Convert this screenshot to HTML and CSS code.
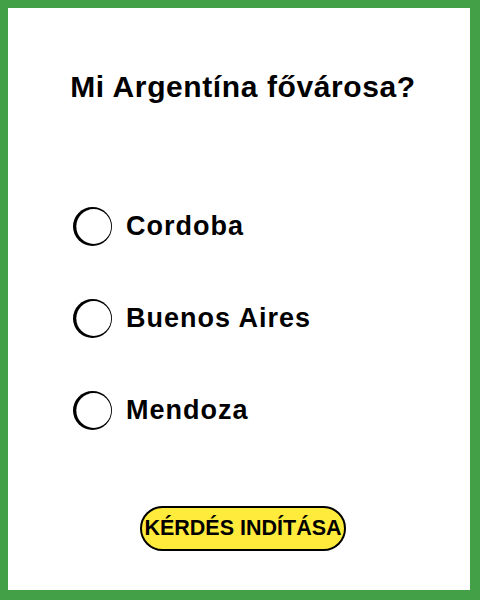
FILE: index.html
```html
<!DOCTYPE html>
<html lang="hu">
<head>
  <meta charset="UTF-8">
  <meta name="viewport" content="width=device-width, initial-scale=1.0">
  <title>Kvíz</title>
  <link rel="stylesheet" href="styles.css">
</head>
<body>
  <div class="frame">
    <h1 class="question">Mi Argentína fővárosa?</h1>

    <!-- Answer options -->
    <ul class="options">
      <li class="option">
        <svg class="radio" viewBox="0 0 39 39" width="39" height="39">
          <circle cx="19.5" cy="19.5" r="19.5" fill="#000"/>
          <circle cx="20.7" cy="19.5" r="17.4" fill="#fff"/>
        </svg>
        <span>Cordoba</span>
      </li>
      <li class="option">
        <svg class="radio" viewBox="0 0 39 39" width="39" height="39">
          <circle cx="19.5" cy="19.5" r="19.5" fill="#000"/>
          <circle cx="20.7" cy="19.5" r="17.4" fill="#fff"/>
        </svg>
        <span>Buenos Aires</span>
      </li>
      <li class="option">
        <svg class="radio" viewBox="0 0 39 39" width="39" height="39">
          <circle cx="19.5" cy="19.5" r="19.5" fill="#000"/>
          <circle cx="20.7" cy="19.5" r="17.4" fill="#fff"/>
        </svg>
        <span>Mendoza</span>
      </li>
    </ul>

    <button class="start">KÉRDÉS INDÍTÁSA</button>
  </div>
</body>
</html>
```

FILE: styles.css
```css
body {
  margin: 0;
  font-family: "Liberation Sans", Arial, sans-serif;
  color: #000;
  background: #fff;
}
.frame {
  box-sizing: border-box;
  height: 600px;
  padding-left: 8px;
  border-style: solid;
  border-color: #43a047;
  border-width: 8px 10px 10px 8px;
  display: flex;
  flex-direction: column;
  align-items: center;
}
.question {
  margin: 59px 0 0;
  font-size: 30px;
  font-weight: bold;
  letter-spacing: 0.6px;
  line-height: 40px;
}
.options {
  list-style: none;
  margin: 96px 0 0 57px;
  padding: 0;
  align-self: flex-start;
}
.option {
  display: flex;
  align-items: center;
  gap: 14px;
  height: 46px;
  margin-bottom: 46px;
  font-size: 27px;
  font-weight: bold;
  letter-spacing: 1px;
}
.radio {
  display: block;
}
.start {
  margin-top: 27px;
  padding: 0 2px;
  height: 45px;
  background: #ffeb3b;
  border: 2px solid #000;
  border-radius: 23px;
  font-family: inherit;
  font-size: 21.5px;
  font-weight: bold;
  color: #000;
}
```
